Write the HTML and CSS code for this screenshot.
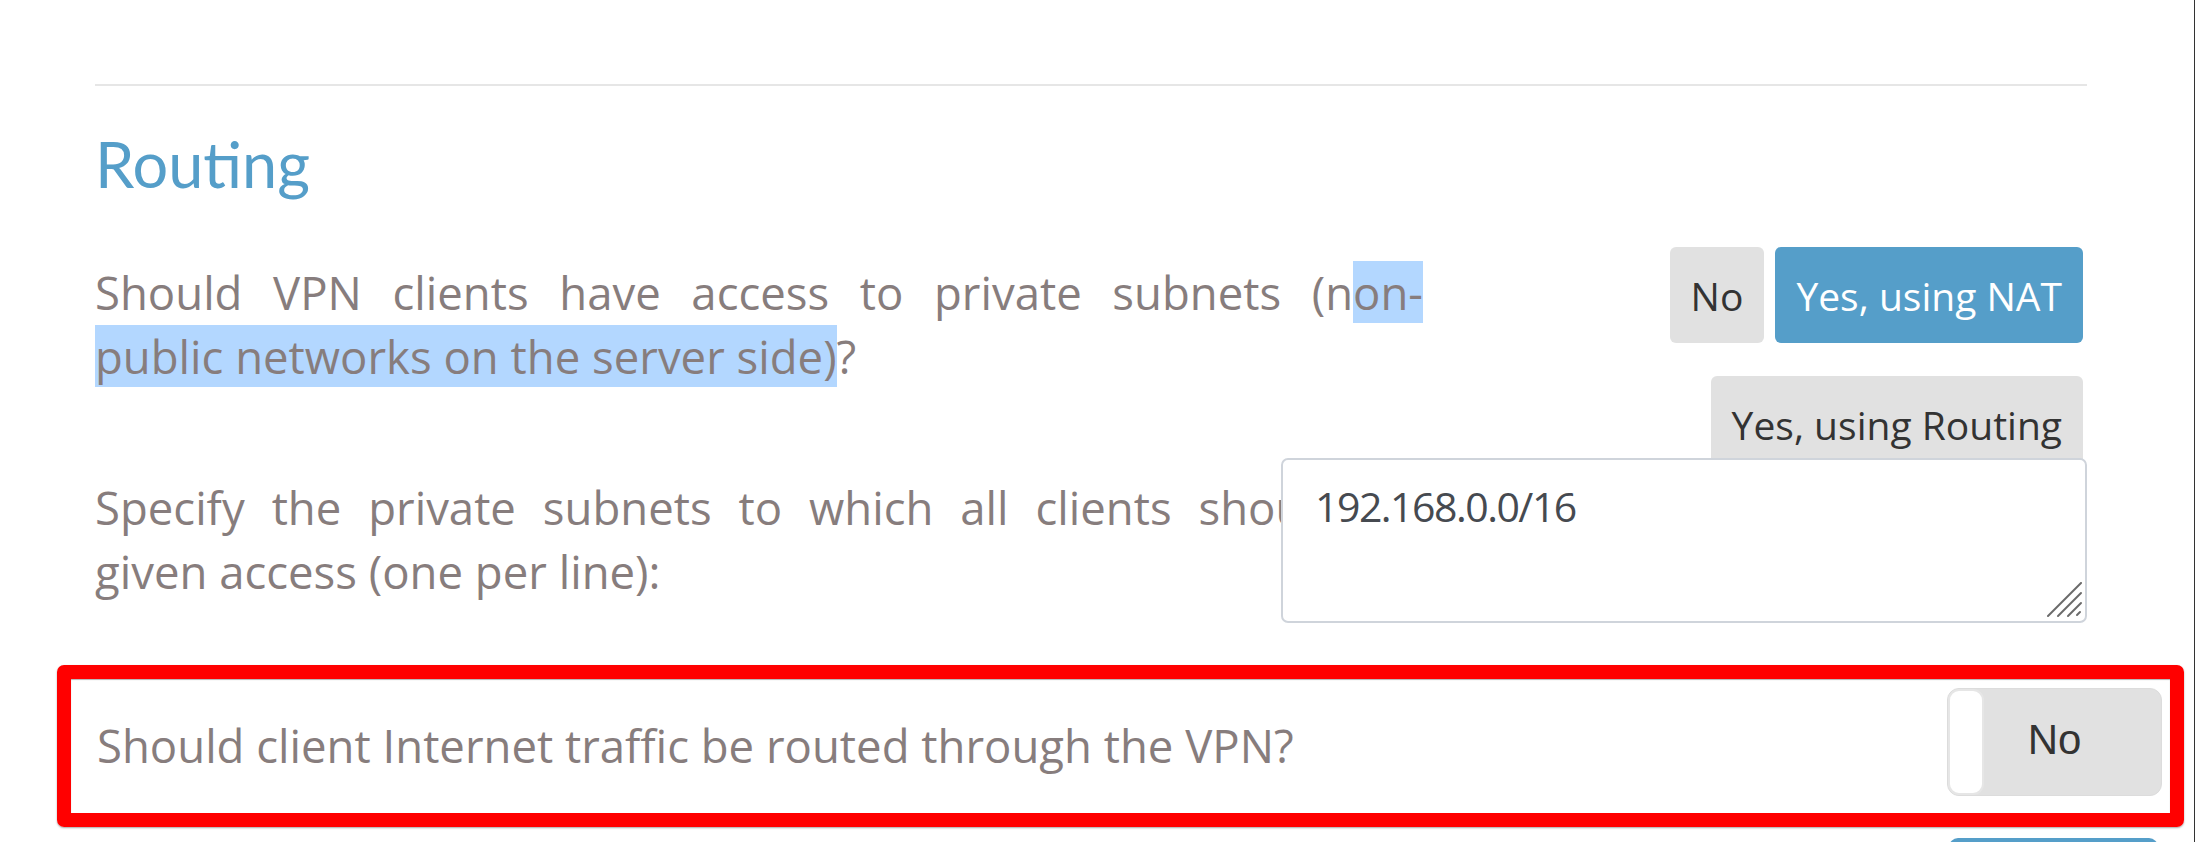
FILE: index.html
```html
<!DOCTYPE html>
<html lang="en">
<head>
<meta charset="utf-8">
<title>Routing</title>
<link rel="stylesheet" href="styles.css">
</head>
<body>
<div class="page">
  <div class="content">
    <hr class="rule">
    <h2 class="title">Routing</h2>

    <div class="row row-access">
      <p class="lbl lbl-access"><span class="line-just">Should VPN clients have access to private subnets (n<span class="sel">on-</span></span><span class="sel">public networks on the server side)</span>?</p>
      <div class="btns">
        <button class="btn">No</button>
        <button class="btn btn-primary">Yes, using NAT</button>
        <button class="btn">Yes, using Routing</button>
      </div>
    </div>

    <div class="row row-subnets">
      <p class="lbl lbl-subnets"><span class="line-just">Specify the private subnets to which all clients should be</span>given access (one per line):</p>
      <div class="ta-wrap">
        <textarea class="ta" spellcheck="false">192.168.0.0/16</textarea>
        <svg class="grip" width="36" height="36" viewBox="0 0 36 36" aria-hidden="true">
          <g stroke="#6a6a6a" stroke-width="2" stroke-linecap="round" fill="none">
            <line x1="1" y1="34" x2="34" y2="1"/>
            <line x1="11" y1="34" x2="34" y2="11"/>
            <line x1="21" y1="34" x2="34" y2="21"/>
            <line x1="30" y1="33" x2="33" y2="30"/>
          </g>
        </svg>
      </div>
    </div>

    <div class="hl">
      <p class="lbl lbl-inet">Should client Internet traffic be routed through the VPN?</p>
      <div class="toggle">
        <span class="knob"></span>
        <span class="toggle-text">No</span>
      </div>
    </div>

    <div class="more">
      <button class="btn btn-primary btn-more"></button>
    </div>
  </div>
</div>
</body>
</html>
```

FILE: styles.css
```css
* { box-sizing: border-box; }

html, body {
  margin: 0;
  padding: 0;
  background: #ffffff;
}

body {
  height: 842px;
  overflow: hidden;
}

.page {
  width: 2195px;
  height: 842px;
  border-right: 1px solid #333333;
  padding: 84px 0 0 95px;
  font-family: "Open Sans", "Noto Sans", sans-serif;
  color: #877d7d;
  overflow: hidden;
}

.content {
  width: 1992px;
}

.rule {
  height: 2px;
  margin: 0;
  border: 0;
  background: #e6e6e6;
}

.title {
  margin: 43px 0 0;
  font-family: Lato, "Open Sans", sans-serif;
  font-weight: 400;
  font-size: 63px;
  line-height: 69px;
  color: #559ec9;
}

.lbl {
  margin: 0;
  font-size: 45.5px;
  line-height: 64px;
  text-align: justify;
}

.line-just {
  display: block;
  text-align: justify;
  text-align-last: justify;
}

.sel {
  background: #b3d7ff;
}

.row {
  display: grid;
  align-items: start;
}

.row-access {
  grid-template-columns: 1328px 664px;
  margin-top: 49px;
}

.lbl-access {
  margin-top: 13px;
}

.btns {
  display: flex;
  flex-wrap: wrap;
  justify-content: flex-end;
  gap: 33px 11px;
  padding-right: 4px;
}

.btn {
  height: 96px;
  padding: 0 21px;
  border: 0;
  border-radius: 6px;
  background: #e1e1e1;
  color: #333333;
  font-family: "Open Sans", "Noto Sans", sans-serif;
  font-size: 39px;
  display: flex;
  align-items: center;
}

.btn-primary {
  background: #559ec9;
  color: #ffffff;
}

.row-subnets {
  grid-template-columns: 1186px 142px 664px;
  margin-top: -14px;
}

.lbl-subnets {
  grid-column: 1 / 3;
  grid-row: 1;
  margin-top: 17px;
}

.ta-wrap {
  grid-column: 2 / 4;
  grid-row: 1;
  position: relative;
  height: 165px;
}

.ta {
  display: block;
  width: 100%;
  height: 100%;
  margin: 0;
  padding: 16px 32px;
  border: 2px solid #cfd4db;
  border-radius: 7px;
  background: #ffffff;
  color: #464a50;
  font-family: "Open Sans", "Noto Sans", sans-serif;
  font-size: 41px;
  letter-spacing: -1.5px;
  line-height: 60px;
  resize: none;
  outline: none;
}

.grip {
  position: absolute;
  right: 4px;
  bottom: 5px;
}

.hl {
  margin: 42px 0 0 -38px;
  width: 2127px;
  border: 14px solid #ff0000;
  border-radius: 7px;
  box-shadow: 0 1px 2px rgba(0, 0, 0, 0.35), inset 0 1px 1px rgba(0, 0, 0, 0.3);
  padding: 9px 8px 17px 26px;
  display: flex;
  justify-content: space-between;
  align-items: flex-start;
}

.lbl-inet {
  margin-top: 25px;
}

.toggle {
  position: relative;
  width: 215px;
  height: 108px;
  border: 1px solid #dcdcdc;
  border-radius: 12px;
  background: #e1e1e1;
  display: flex;
  align-items: center;
  justify-content: center;
  padding-bottom: 4px;
}

.knob {
  position: absolute;
  left: 0;
  top: 0;
  bottom: 0;
  width: 36px;
  background: #ffffff;
  border: 2px solid #e6e6e6;
  border-radius: 11px;
}

.toggle-text {
  font-family: "Liberation Sans", Arial, sans-serif;
  font-size: 42px;
  color: #333333;
}

.more {
  width: 2063px;
  display: flex;
  justify-content: flex-end;
  margin-top: 11px;
}

.btn-more {
  width: 209px;
  height: 60px;
  border-radius: 9px;
}
```
